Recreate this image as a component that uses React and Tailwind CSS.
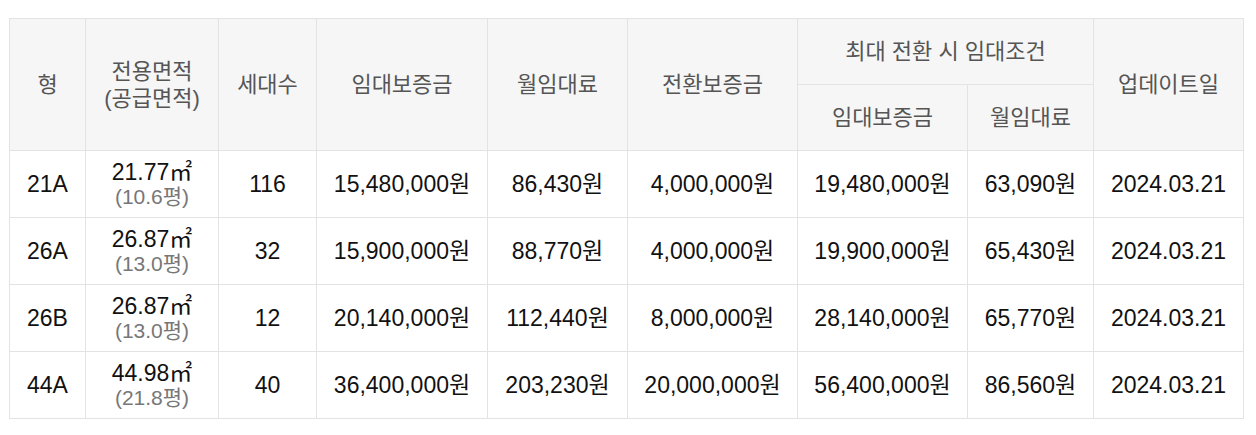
import React from "react";

const rows = [
  ["21A", "21.77", "10.6", "116", "15,480,000원", "86,430원", "4,000,000원", "19,480,000원", "63,090원", "2024.03.21"],
  ["26A", "26.87", "13.0", "32", "15,900,000원", "88,770원", "4,000,000원", "19,900,000원", "65,430원", "2024.03.21"],
  ["26B", "26.87", "13.0", "12", "20,140,000원", "112,440원", "8,000,000원", "28,140,000원", "65,770원", "2024.03.21"],
  ["44A", "44.98", "21.8", "40", "36,400,000원", "203,230원", "20,000,000원", "56,400,000원", "86,560원", "2024.03.21"],
];

const widths = [76, 133, 98, 171, 140, 170, 170, 126, 150];

const th = "border border-[#e3e3e3] bg-[#f6f6f6] font-normal text-[#555] text-[22px] leading-[27px] text-center";
const td = "border border-[#e3e3e3] text-[#111] text-[23px] text-center";

export default function App() {
  return (
    <div className="bg-white w-[1256px] h-[435px] pt-[18px] pl-[9px] font-['Liberation_Sans','Noto_Sans_CJK_KR',sans-serif]">
      <table className="table-fixed border-collapse w-[1234px] border-t border-t-[#cfcfcf]">
        <colgroup>
          {widths.map((w, i) => (
            <col key={i} style={{ width: w }} />
          ))}
        </colgroup>
        <thead>
          <tr className="h-[66px]">
            <th rowSpan={2} className={th}>형</th>
            <th rowSpan={2} className={th}>
              전용면적
              <br />
              (공급면적)
            </th>
            <th rowSpan={2} className={th}>세대수</th>
            <th rowSpan={2} className={th}>임대보증금</th>
            <th rowSpan={2} className={th}>월임대료</th>
            <th rowSpan={2} className={th}>전환보증금</th>
            <th colSpan={2} className={th}>최대 전환 시 임대조건</th>
            <th rowSpan={2} className={th}>업데이트일</th>
          </tr>
          <tr className="h-[66px]">
            <th className={th}>임대보증금</th>
            <th className={th}>월임대료</th>
          </tr>
        </thead>
        <tbody>
          {rows.map((r, i) => (
            <tr key={i} className="h-[67px]">
              <td className={td}>{r[0]}</td>
              <td className={td}>
                <div className="leading-[25px]">{r[1]}㎡</div>
                <div className="leading-[24px] text-[21px] text-[#777]">({r[2]}평)</div>
              </td>
              {r.slice(3).map((c, j) => (
                <td key={j} className={td}>{c}</td>
              ))}
            </tr>
          ))}
        </tbody>
      </table>
    </div>
  );
}
